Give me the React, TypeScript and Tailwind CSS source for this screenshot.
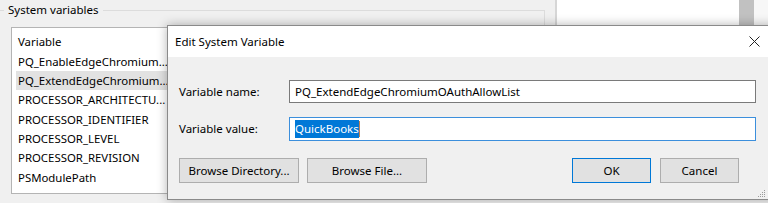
const variables = [
  "PQ_EnableEdgeChromium...",
  "PQ_ExtendEdgeChromium...",
  "PROCESSOR_ARCHITECTU...",
  "PROCESSOR_IDENTIFIER",
  "PROCESSOR_LEVEL",
  "PROCESSOR_REVISION",
  "PSModulePath",
  "TEMP",
];

function WinButton({
  label,
  width,
  isDefault,
}: {
  label: string;
  width: string;
  isDefault?: boolean;
}) {
  return (
    <button
      className={`h-[25px] ${width} flex items-center justify-center bg-[#e1e1e1] text-[11.5px] text-black border ${
        isDefault ? "border-[#0078d7]" : "border-[#adadad]"
      }`}
    >
      {label}
    </button>
  );
}

function EditDialog() {
  return (
    <div className="absolute left-[167px] top-[25px] w-[610px] h-[175px] border border-[#8a8a8a] bg-[#f0f0f0] shadow-[0_0_10px_rgba(0,0,0,0.3)] flex flex-col">
      <div className="h-[31px] bg-white flex items-center justify-between pl-[7px] pr-[16px] shrink-0">
        <span className="text-[11.5px] text-black">Edit System Variable</span>
        <svg width="11" height="11" viewBox="0 0 11 11">
          <path d="M0.5 0.5 L10.5 10.5 M10.5 0.5 L0.5 10.5" stroke="#222" strokeWidth="1" />
        </svg>
      </div>
      <div className="flex flex-col pl-[11px] pt-[23px] pr-[12px]">
        <div className="flex items-center h-[23px]">
          <span className="w-[110px] text-[11.5px] text-black">Variable name:</span>
          <div className="w-[467px] h-[23px] bg-white border border-[#7a7a7a] flex items-center pl-[5px] text-[11.5px] text-black">
            PQ_ExtendEdgeChromiumOAuthAllowList
          </div>
        </div>
        <div className="flex items-center h-[24px] mt-[14px]">
          <span className="w-[110px] text-[11.5px] text-black">Variable value:</span>
          <div className="w-[467px] h-[24px] bg-white border border-[#3c8fdc] flex items-center pl-[5px] text-[11.5px]">
            <span className="bg-[#0078d7] text-white leading-[18px]">QuickBooks</span>
            <span className="w-px h-[16px] bg-[#c08050]" />
          </div>
        </div>
        <div className="flex items-center mt-[17px]">
          <WinButton label="Browse Directory..." width="w-[120px]" />
          <div className="w-[8px]" />
          <WinButton label="Browse File..." width="w-[120px]" />
          <div className="flex-1" />
          <WinButton label="OK" width="w-[79px]" isDefault />
          <div className="w-[9px]" />
          <WinButton label="Cancel" width="w-[79px]" />
          <div className="w-[25px]" />
        </div>
      </div>
      <svg width="9" height="9" viewBox="0 0 9 9" className="absolute left-[589px] top-[163px]">
        <rect x="7" y="1" width="1" height="1" fill="#9a9a9a" />
        <rect x="5" y="3" width="1" height="1" fill="#9a9a9a" />
        <rect x="7" y="3" width="1" height="1" fill="#9a9a9a" />
        <rect x="3" y="5" width="1" height="1" fill="#9a9a9a" />
        <rect x="5" y="5" width="1" height="1" fill="#9a9a9a" />
        <rect x="7" y="5" width="1" height="1" fill="#9a9a9a" />
        <rect x="1" y="7" width="1" height="1" fill="#9a9a9a" />
        <rect x="3" y="7" width="1" height="1" fill="#9a9a9a" />
        <rect x="5" y="7" width="1" height="1" fill="#9a9a9a" />
        <rect x="7" y="7" width="1" height="1" fill="#9a9a9a" />
      </svg>
    </div>
  );
}

export default function App() {
  return (
    <div
      className="relative w-[768px] h-[203px] overflow-hidden bg-[#f0f0f0] text-black"
      style={{ fontFamily: '"Noto Sans", "Open Sans", sans-serif' }}
    >
      <div className="flex h-[25px]">
        <div className="w-[545px] flex items-start">
          <div className="w-[4px] mt-[10px] border-t border-[#dcdcdc]" />
          <span className="text-[11.5px] leading-[20px] px-[4px]">System variables</span>
          <div className="flex-1 h-[15px] mt-[10px] border-t border-r border-[#dcdcdc]" />
        </div>
        <div className="w-[10px]" />
        <div className="w-[2px] bg-[#d6d6d6]" />
        <div className="w-[182px] bg-white" />
        <div className="w-[15px] bg-[#c1c1c1]" />
        <div className="flex-1 bg-[#f7f7f7]" />
      </div>
      <div className="ml-[11px] mt-[2px] w-[520px] h-[167px] bg-white border border-[#b4b4b4] overflow-hidden pt-[4px] px-[4px]">
        <div className="h-[19.4px] flex items-center pl-[2px] text-[11.4px]">Variable</div>
        {variables.map((v, i) => (
          <div
            key={v}
            className={`h-[19.4px] flex items-center pl-[2px] text-[11.4px] ${
              i === 1 ? "bg-[#e2e2e2]" : ""
            }`}
          >
            {v}
          </div>
        ))}
      </div>
      <EditDialog />
    </div>
  );
}
